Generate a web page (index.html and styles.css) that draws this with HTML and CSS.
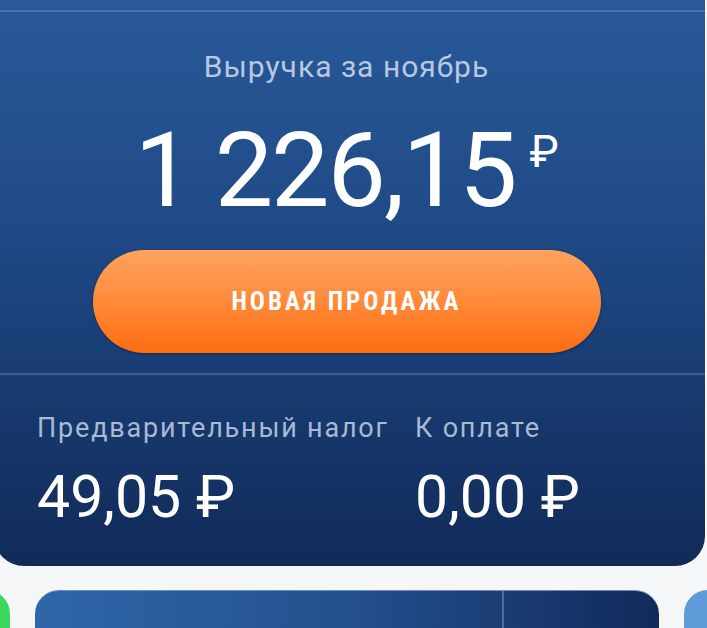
FILE: index.html
```html
<!DOCTYPE html>
<html lang="ru">
<head>
    <meta charset="UTF-8">
    <meta name="viewport" content="width=device-width, initial-scale=1.0">
    <title>Мой налог</title>
    <link rel="stylesheet" href="styles.css">
</head>
<body>
    <main class="home">
        <section class="summary">
            <div class="summary-top"></div>
            <div class="revenue">
                <p class="revenue-title">Выручка за ноябрь</p>
                <div class="revenue-amount">
                    <span class="revenue-value">1&nbsp;226,15</span>
                    <span class="revenue-currency">₽</span>
                </div>
                <button class="sale-button" type="button">Новая продажа</button>
            </div>
            <div class="taxes">
                <div class="tax">
                    <p class="tax-label">Предварительный налог</p>
                    <p class="tax-value">49,05 ₽</p>
                </div>
                <div class="tax">
                    <p class="tax-label">К оплате</p>
                    <p class="tax-value">0,00 ₽</p>
                </div>
            </div>
        </section>
        <div class="cards">
            <div class="card card-green"></div>
            <div class="card card-main">
                <div class="card-split"></div>
            </div>
            <div class="card card-light"></div>
        </div>
    </main>
</body>
</html>
```

FILE: styles.css
```css
html, body {
    overflow: hidden;
}

body {
    margin: 0;
    padding: 0;
    background-color: #f5f6f8;
    font-family: Roboto, "Noto Sans", sans-serif;
}

p {
    margin: 0;
}

.summary {
    width: 711px;
    margin-left: -6px;
    background: linear-gradient(180deg, #29599a 0%, #1f4a86 40%, #183a70 70%, #112a58 100%);
    border-radius: 0 0 30px 30px;
    color: white;
}

.summary-top {
    height: 10px;
    border-bottom: 2px solid #4a74ad;
}

.revenue {
    padding: 37px 6px 20px 0;
    text-align: center;
    border-bottom: 2px solid #3b5f95;
}

.revenue-title {
    font-size: 30px;
    line-height: 36px;
    letter-spacing: 1px;
    color: #b7c8e2;
}

.revenue-amount {
    display: flex;
    justify-content: center;
    align-items: flex-start;
    margin-top: 34px;
}

.revenue-value {
    font-size: 104px;
    line-height: 104px;
    letter-spacing: -2px;
}

.revenue-currency {
    font-size: 44px;
    line-height: 44px;
    margin-top: 11px;
    margin-left: 14px;
}

.sale-button {
    display: block;
    width: 508px;
    height: 103px;
    margin: 27px auto 0;
    border: none;
    border-radius: 52px;
    background: linear-gradient(180deg, #ffa35f 0%, #ff8a3a 50%, #ff6d10 100%);
    box-shadow: 0 1px 3px rgba(0, 0, 0, 0.35);
    color: white;
    font-family: "Roboto Condensed", "DejaVu Sans Condensed", sans-serif;
    font-weight: bold;
    font-size: 25px;
    letter-spacing: 3px;
    text-transform: uppercase;
}

.taxes {
    display: flex;
    padding: 37px 0 37px 43px;
}

.tax {
    flex: none;
    width: 378px;
    white-space: nowrap;
}

.tax-label {
    font-size: 27px;
    line-height: 32px;
    letter-spacing: 1.8px;
    color: #a8bad4;
}

.tax-value {
    margin-top: 21px;
    font-size: 59px;
    line-height: 64px;
}

.cards {
    display: flex;
    gap: 25px;
    margin-top: 24px;
    margin-left: -40px;
}

.card {
    flex: none;
    height: 100px;
    border-radius: 24px;
}

.card-green {
    width: 50px;
    background-color: #3bd65c;
}

.card-main {
    position: relative;
    width: 624px;
    background: linear-gradient(90deg, #2e66a9 0%, #23508e 50%, #12295a 100%);
    border-top: 1px solid #6d8fbd;
}

.card-split {
    position: absolute;
    top: 0;
    bottom: 0;
    left: 467px;
    width: 2px;
    background-color: rgba(255, 255, 255, 0.25);
}

.card-light {
    width: 100px;
    background-color: #5e9bd8;
}
```
